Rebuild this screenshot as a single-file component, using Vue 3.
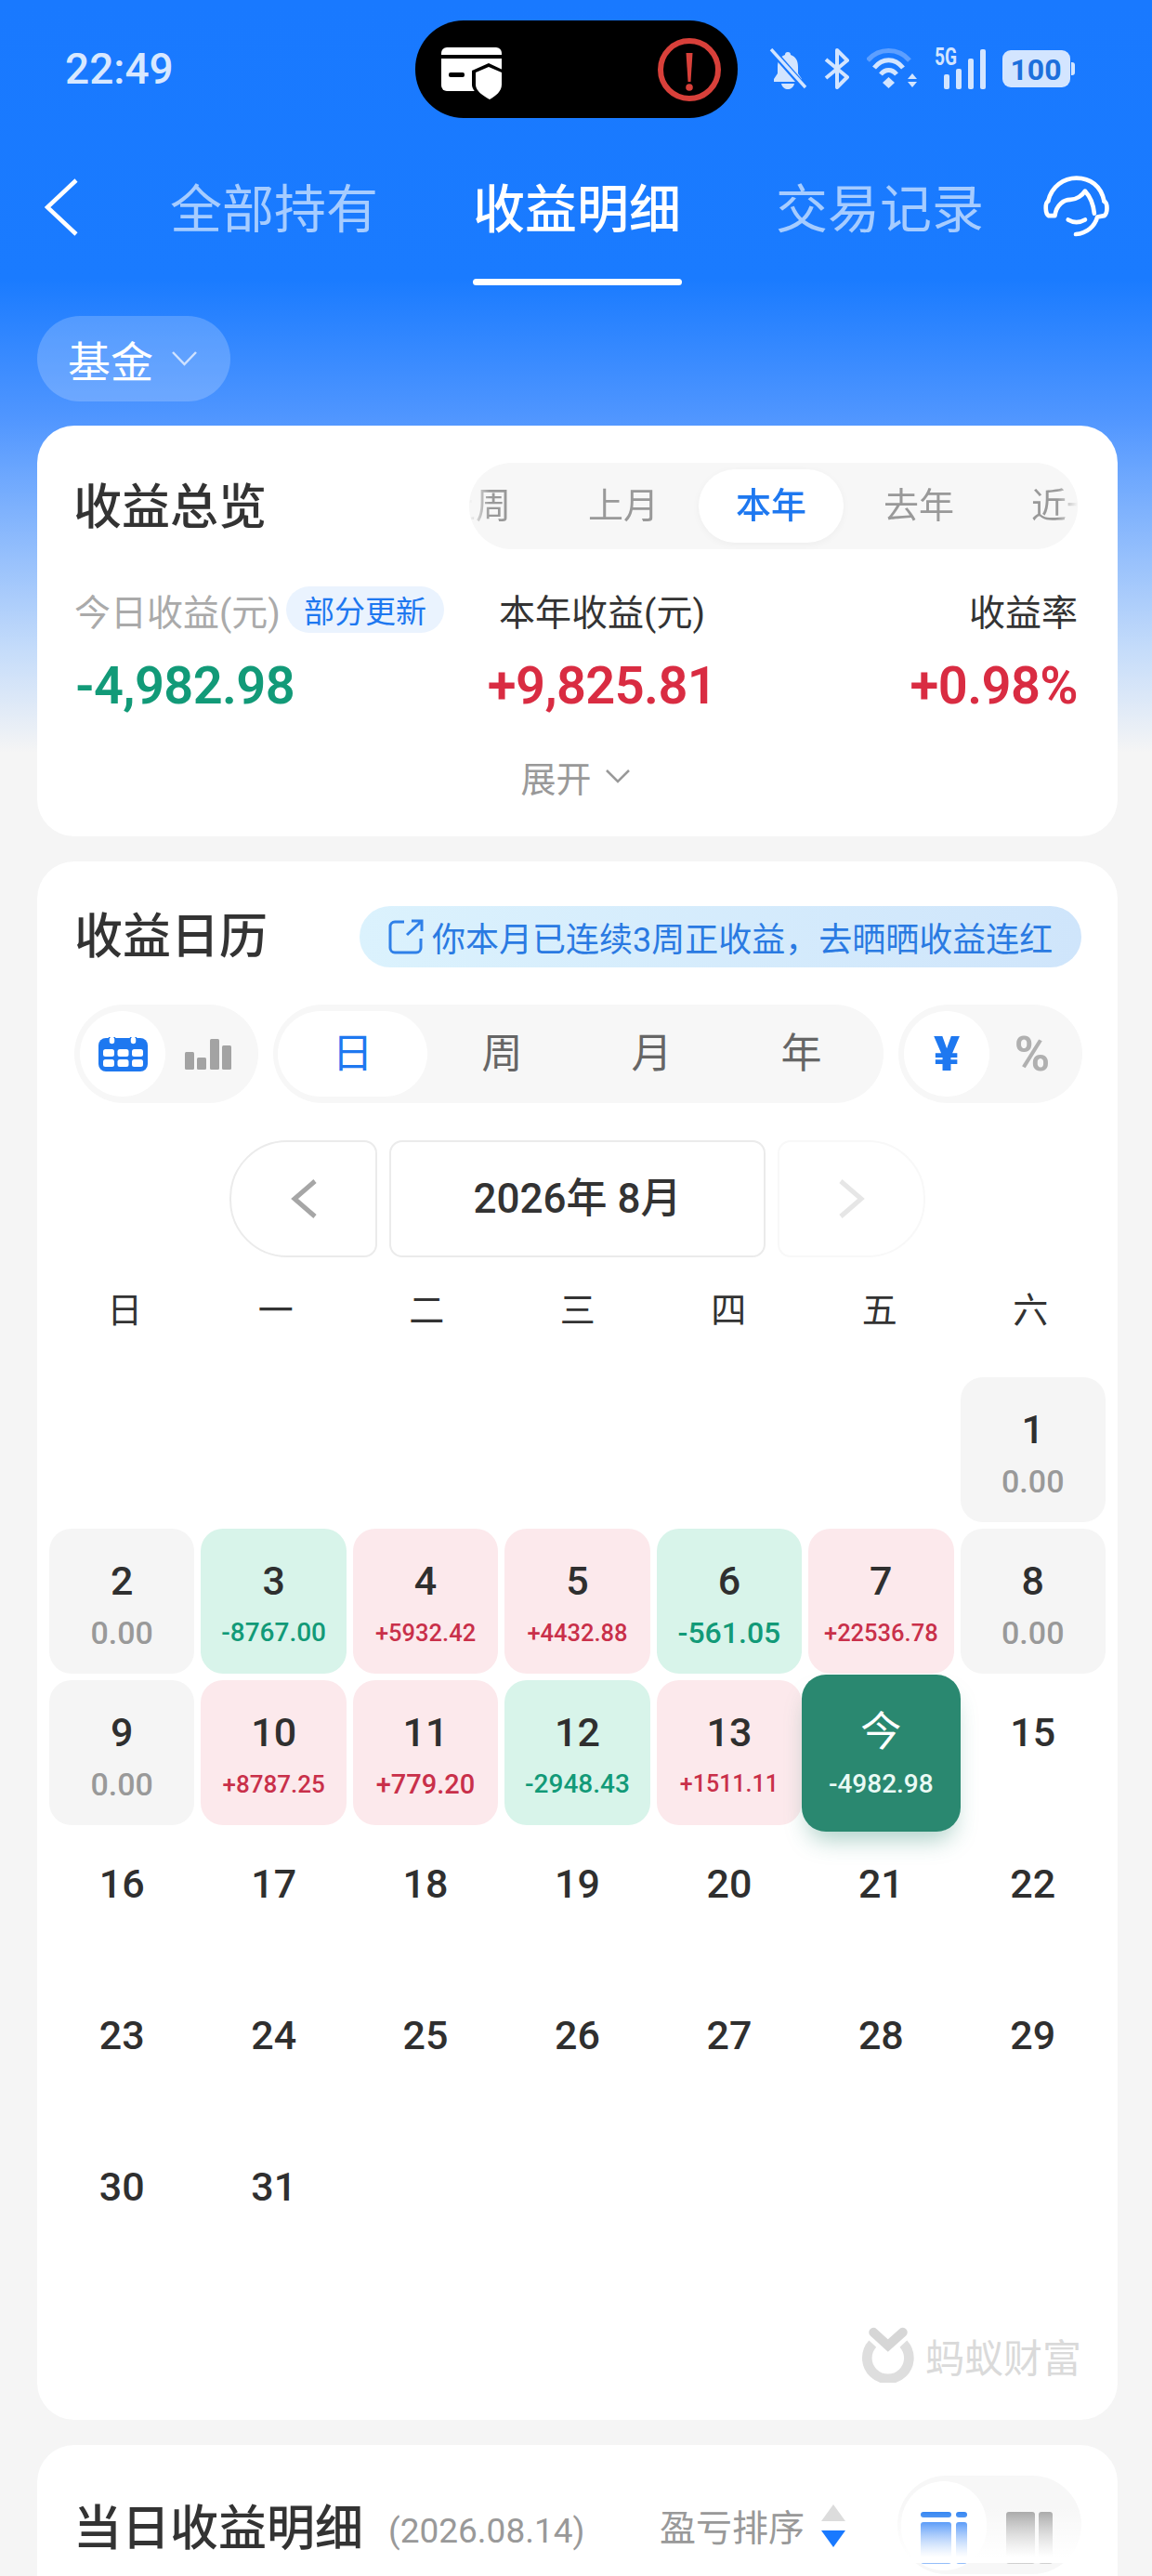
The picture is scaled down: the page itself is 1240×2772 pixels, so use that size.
<script setup>
const weekdays = ['日', '一', '二', '三', '四', '五', '六']
const blanks = [1, 2, 3, 4, 5, 6]
const cells = [
  { d: '1', v: '0.00', t: 'zero', s: 34 },
  { d: '2', v: '0.00', t: 'zero', s: 34 },
  { d: '3', v: '-8767.00', t: 'down', s: 28 },
  { d: '4', v: '+5932.42', t: 'up', s: 25.5 },
  { d: '5', v: '+4432.88', t: 'up', s: 25.5 },
  { d: '6', v: '-561.05', t: 'down', s: 32 },
  { d: '7', v: '+22536.78', t: 'up', s: 25.5 },
  { d: '8', v: '0.00', t: 'zero', s: 34 },
  { d: '9', v: '0.00', t: 'zero', s: 34 },
  { d: '10', v: '+8787.25', t: 'up', s: 26 },
  { d: '11', v: '+779.20', t: 'up', s: 29 },
  { d: '12', v: '-2948.43', t: 'down', s: 28 },
  { d: '13', v: '+1511.11', t: 'up', s: 25 },
  { d: '今', v: '-4982.98', t: 'today', s: 28 },
  ...Array.from({ length: 17 }, (_, i) => ({ d: String(15 + i), v: '', t: 'plain', s: 0 }))
]
const periods = ['上周', '上月', '本年', '去年', '近一月']
const units = ['日', '周', '月', '年']
</script>

<template>
  <div class="page">
    <div class="status">
      <span class="time">22:49</span>
      <div class="island">
        <svg class="isl-card" width="68" height="60" viewBox="0 0 68 60">
          <path d="M6 0H59a6 6 0 0 1 6 6V8H0V6a6 6 0 0 1 6-6Z" fill="#fff" />
          <path d="M0 12H65V47H6a6 6 0 0 1-6-6Z" fill="#fff" />
          <rect x="8" y="27" width="17" height="5" rx="2" fill="#000" />
          <path d="M51 17 68 25V40C68 48 60 55 52 59 44 55 33 48 33 40V25Z" fill="#000" />
          <path d="M51 21 65 27V40C65 47 59 52 52 56 45 52 37 47 37 40V27Z" fill="#fff" />
        </svg>
        <svg class="isl-alert" width="70" height="70" viewBox="0 0 70 70">
          <circle cx="35" cy="35" r="31" fill="none" stroke="#d8403a" stroke-width="6" />
          <path d="M31.500 17h7l-2 31h-3Z" fill="#d8403a" />
          <circle cx="35" cy="54" r="3.800" fill="#d8403a" />
        </svg>
      </div>
      <div class="sys">
        <svg width="41" height="44" viewBox="0 0 41 44">
          <path d="M20 4a3 3 0 0 1 3 3c6 2 8 7 8 13v7l4 6v3H5v-3l4-6v-7c0-6 2-11 8-13a3 3 0 0 1 3-3Z" fill="#d3e5ff" />
          <path d="M13 38h14c-1 4-4 6-7 6s-6-2-7-6Z" fill="#d3e5ff" />
          <path d="M1 0 38 42" stroke="#1979ff" stroke-width="7" />
          <path d="M2 1 39 42" stroke="#d3e5ff" stroke-width="3.400" />
        </svg>
        <svg width="28" height="44" viewBox="0 0 28 44">
          <path d="M2 12 25 31 14 42V2L25 13 2 32" fill="none" stroke="#d3e5ff" stroke-width="4" stroke-linejoin="round" />
        </svg>
        <svg width="55" height="44" viewBox="0 0 55 44">
          <path d="M1 13C13 -1 34 -1 46 13" fill="none" stroke="#5d9fff" stroke-width="5" />
          <path d="M8 21C17 10 30 10 39 21" fill="none" stroke="#d3e5ff" stroke-width="5" />
          <path d="M15 28C20 22 27 22 32 28" fill="none" stroke="#d3e5ff" stroke-width="5" />
          <path d="M23.500 31 30 37 23.500 43 17 37Z" fill="#d3e5ff" />
          <path d="M49 27 54 33H44ZM44 36H54L49 42Z" fill="#d3e5ff" />
        </svg>
        <svg class="signal" width="55" height="54" viewBox="0 -10 55 54">
          <text x="0" y="18" class="five-g" textLength="24" lengthAdjust="spacingAndGlyphs">5G</text>
          <rect x="10" y="28" width="6" height="16" rx="2" fill="#d3e5ff" />
          <rect x="23" y="22" width="6" height="22" rx="2" fill="#d3e5ff" />
          <rect x="36" y="11" width="6" height="33" rx="2" fill="#d3e5ff" />
          <rect x="49" y="1" width="6" height="43" rx="2" fill="#d3e5ff" />
        </svg>
        <svg width="78" height="44" viewBox="0 0 78 44">
          <rect x="0" y="2" width="73" height="40" rx="9" fill="#d3e5ff" />
          <path d="M74 15h1a3 3 0 0 1 3 3v8a3 3 0 0 1-3 3h-1Z" fill="#d3e5ff" />
          <text x="36" y="34" class="batt">100</text>
        </svg>
      </div>
    </div>

    <div class="nav">
      <svg class="back" width="36" height="62" viewBox="0 0 36 62">
        <path d="M34 2 3 31 34 60" fill="none" stroke="#fff" stroke-width="4.500" />
      </svg>
      <div class="tabs">
        <div class="tab">全部持有</div>
        <div class="tab on">收益明细<i class="bar"></i></div>
        <div class="tab">交易记录</div>
      </div>
      <svg class="headset" width="72" height="68" viewBox="40 42 216 205">
        <g fill="none" stroke="#fff" stroke-width="14" stroke-linecap="round" stroke-linejoin="round">
          <path d="M58 125C70 75 110 50 150 50 195 50 230 75 240 125" />
          <path d="M58 125C48 130 48 165 60 172L80 172C85 135 110 120 130 120 150 120 170 105 178 92 195 110 205 135 208 165" />
          <path d="M240 125C252 130 252 165 240 172L218 176C210 205 185 230 148 232" />
          <path d="M123 185C140 195 160 195 178 185" />
        </g>
      </svg>
    </div>

    <div class="filter">基金
      <svg width="29" height="16" viewBox="0 0 29 16"><path d="M2 1 14.500 14 27 1" fill="none" stroke="#cfe2ff" stroke-width="2.500" /></svg>
    </div>

    <section class="card overview">
      <div class="ov-head">
        <h2 class="title">收益总览</h2>
        <div class="periods">
          <div class="periods-view">
            <div class="periods-track">
              <span v-for="p in periods" :key="p" class="period" :class="{ on: p === '本年' }">{{ p }}</span>
            </div>
          </div>
        </div>
      </div>
      <div class="stats">
        <div class="stat">
          <div class="label muted">今日收益(元)<span class="tag">部分更新</span></div>
          <div class="num green">-4,982.98</div>
        </div>
        <div class="stat mid">
          <div class="label">本年收益(元)</div>
          <div class="num red">+9,825.81</div>
        </div>
        <div class="stat end">
          <div class="label">收益率</div>
          <div class="num red">+0.98%</div>
        </div>
      </div>
      <div class="expand">展开
        <svg width="28" height="15" viewBox="0 0 28 15"><path d="M2 1 14 13 26 1" fill="none" stroke="#999" stroke-width="2.500" /></svg>
      </div>
    </section>

    <section class="card calendar">
      <div class="cal-head">
        <h2 class="title">收益日历</h2>
        <div class="banner">
          <svg width="38" height="38" viewBox="0 0 38 38">
            <path d="M17 3H7a5 5 0 0 0-5 5v23a5 5 0 0 0 5 5h23a5 5 0 0 0 5-5V21" fill="none" stroke="#2f80e8" stroke-width="3" />
            <path d="M20 17 35 3M25 2h11v11" fill="none" stroke="#2f80e8" stroke-width="3" />
          </svg>
          <span>你本月已连续3周正收益，去晒晒收益连红</span>
        </div>
      </div>

      <div class="controls">
        <div class="toggle">
          <span class="knob">
            <svg width="53" height="37" viewBox="0 0 53 37">
              <path d="M8 1H45a8 8 0 0 1 8 8V29a8 8 0 0 1-8 8H8a8 8 0 0 1-8-8V9a8 8 0 0 1 8-8Z" fill="#1e78f0" />
              <rect x="11" y="-1" width="7" height="9" rx="3.500" fill="#fff" stroke="#1e78f0" stroke-width="1.500" />
              <rect x="34" y="-1" width="7" height="9" rx="3.500" fill="#fff" stroke="#1e78f0" stroke-width="1.500" />
              <g fill="#fff">
                <rect x="5" y="13" width="12" height="8" rx="2.500" /><rect x="20.500" y="13" width="12" height="8" rx="2.500" /><rect x="36" y="13" width="12" height="8" rx="2.500" />
                <rect x="5" y="24" width="12" height="8" rx="2.500" /><rect x="20.500" y="24" width="12" height="8" rx="2.500" /><rect x="36" y="24" width="12" height="8" rx="2.500" />
              </g>
            </svg>
          </span>
          <span class="alt">
            <svg width="50" height="33" viewBox="0 0 50 33" fill="#a3a3a3">
              <rect x="0" y="14" width="10" height="19" rx="1.500" /><rect x="13" y="20" width="10" height="13" rx="1.500" /><rect x="27" y="0" width="10" height="33" rx="1.500" /><rect x="40" y="7" width="10" height="26" rx="1.500" />
            </svg>
          </span>
        </div>
        <div class="units">
          <span v-for="u in units" :key="u" class="unit" :class="{ on: u === '日' }">{{ u }}</span>
        </div>
        <div class="toggle">
          <span class="knob yen">¥</span>
          <span class="alt pct">%</span>
        </div>
      </div>

      <div class="month">
        <div class="m-btn prev">
          <svg width="28" height="42" viewBox="0 0 28 42"><path d="M26 2 4 21 26 40" fill="none" stroke="#a6a6a6" stroke-width="5" /></svg>
        </div>
        <div class="m-label">2026年 8月</div>
        <div class="m-btn next">
          <svg width="28" height="42" viewBox="0 0 28 42"><path d="M2 2 24 21 2 40" fill="none" stroke="#e6e6e6" stroke-width="5" /></svg>
        </div>
      </div>

      <div class="week">
        <span v-for="w in weekdays" :key="w">{{ w }}</span>
      </div>

      <div class="grid">
        <div v-for="b in blanks" :key="b"></div>
        <div v-for="c in cells" :key="c.d" class="cell" :class="c.t">
          <div class="day">{{ c.d }}</div>
          <div v-if="c.v" class="val" :style="{ fontSize: c.s + 'px' }">{{ c.v }}</div>
        </div>
      </div>

      <div class="brand">
        <svg width="58" height="60" viewBox="35 28 175 180">
          <path d="M72 82A68 68 0 1 0 172 82" fill="none" stroke="#dedede" stroke-width="32" />
          <path d="M75 45 122 88 170 45" fill="none" stroke="#d6d6d6" stroke-width="30" stroke-linecap="round" />
        </svg>
        <span>蚂蚁财富</span>
      </div>
    </section>

    <section class="card detail">
      <div class="det-head">
        <h2 class="title">当日收益明细</h2>
        <span class="date">(2026.08.14)</span>
        <span class="sort">盈亏排序</span>
        <svg class="sort-ic" width="28" height="46" viewBox="0 0 28 46">
          <path d="M14 0 27 18H1Z" fill="#dcdcdc" />
          <path d="M1 28H27L14 46Z" fill="#1979ff" />
        </svg>
        <div class="toggle det-toggle">
          <span class="knob">
            <svg width="50" height="56" viewBox="0 0 50 56">
              <defs>
                <linearGradient id="bl" x1="0" y1="0" x2="0" y2="1"><stop offset="0" stop-color="#1470f5" /><stop offset="1" stop-color="#1470f5" stop-opacity=".45" /></linearGradient>
              </defs>
              <rect x="0" y="0" width="33" height="6" rx="3" fill="#1e78f0" /><rect x="38" y="0" width="12" height="6" rx="3" fill="#1e78f0" />
              <rect x="0" y="11" width="33" height="45" rx="3" fill="url(#bl)" /><rect x="38" y="11" width="12" height="45" rx="3" fill="url(#bl)" />
            </svg>
          </span>
          <span class="alt">
            <svg width="50" height="56" viewBox="0 0 50 56">
              <defs>
                <linearGradient id="gr" x1="0" y1="0" x2="0" y2="1"><stop offset="0" stop-color="#a0a0a0" /><stop offset="1" stop-color="#a0a0a0" stop-opacity=".45" /></linearGradient>
              </defs>
              <rect x="0" y="0" width="31" height="56" rx="3" fill="url(#gr)" /><rect x="35" y="0" width="15" height="56" rx="3" fill="url(#gr)" />
            </svg>
          </span>
        </div>
      </div>
      <div class="fade"></div>
    </section>
  </div>
</template>

<style scoped>
.page {
  width: 1240px;
  height: 2772px;
  overflow: hidden;
  position: relative;
  font-family: Roboto, "Noto Sans CJK SC", sans-serif;
  color: #333;
  background: linear-gradient(180deg, #1979ff 0, #1a7bff 300px, #5096ff 450px, #c5dcfa 700px, #f5f5f5 810px);
}
.status {
  display: flex;
  align-items: center;
  height: 105px;
  padding-top: 22px;
}
.time {
  padding-left: 70px;
  box-sizing: border-box;
  width: 447px;
  font-size: 46px;
  font-weight: 500;
  color: #d8e8ff;
  line-height: 1;
  margin-top: -2px;
}
.island {
  width: 347px;
  height: 105px;
  border-radius: 52px;
  background: #000;
  display: flex;
  align-items: center;
  justify-content: space-between;
  box-sizing: border-box;
  padding: 0 17px 0 28px;
}
.isl-card { margin-top: 12px; }
.sys {
  margin-left: 34px;
  display: flex;
  align-items: center;
  gap: 18px;
  margin-top: -2px;
}
.signal { margin-top: -10px; }
.five-g { font: 700 25px Roboto, sans-serif; fill: #d3e5ff; }
.batt { font: 700 32px Roboto, sans-serif; fill: #1d70dc; text-anchor: middle; }
.nav {
  display: flex;
  align-items: flex-start;
  height: 179px;
  padding-left: 48px;
}
.back { margin-top: 65px; margin-right: 101px; flex: none; }
.tabs { display: flex; gap: 106px; margin-top: 69px; }
.tab {
  width: 220px;
  font-size: 56px;
  line-height: 60px;
  color: #a6ccff;
  white-space: nowrap;
  display: flex;
  flex-direction: column;
  align-items: center;
}
.tab.on { color: #fff; font-weight: 500; }
.bar {
  display: block;
  flex: none;
  width: 225px;
  height: 7px;
  border-radius: 4px;
  background: #fff;
  margin-top: 44px;
}
.headset { margin-left: 65px; margin-top: 62px; flex: none; }
.filter {
  margin: 34px 0 0 40px;
  width: 208px;
  height: 92px;
  border-radius: 46px;
  background: rgba(255, 255, 255, .2);
  color: #fff;
  font-size: 46px;
  display: flex;
  align-items: center;
  box-sizing: border-box;
  padding-left: 33px;
  gap: 19px;
}
.card {
  margin: 26px 37px 0 40px;
  background: #fff;
  border-radius: 40px;
}
.title {
  margin: 0;
  font-size: 52px;
  font-weight: 500;
  line-height: 60px;
  color: #333;
  white-space: nowrap;
}
.overview {
  height: 442px;
  padding: 40px 43px 0 39px;
  box-sizing: border-box;
}
.ov-head { display: flex; align-items: center; justify-content: space-between; }
.ov-head .title { margin-top: 5px; }
.periods {
  width: 655px;
  height: 93px;
  border-radius: 46px;
  background: #f7f7f7;
  overflow: hidden;
}
.periods-view {
  height: 93px;
  overflow: hidden;
  -webkit-mask-image: linear-gradient(90deg, transparent 0, #000 22px, #000 calc(100% - 22px), transparent 100%);
  mask-image: linear-gradient(90deg, transparent 0, #000 22px, #000 calc(100% - 22px), transparent 100%);
}
.periods-track {
  display: flex;
  gap: 3px;
  margin-left: -71px;
  padding-top: 7px;
  width: 900px;
}
.period {
  flex: none;
  height: 79px;
  line-height: 79px;
  padding: 0 40px;
  border-radius: 40px;
  font-size: 38px;
  color: #999;
  white-space: nowrap;
}
.period.on {
  background: #fff;
  color: #1e78f0;
  font-weight: 500;
  box-shadow: 0 2px 8px rgba(0, 0, 0, .04);
}
.stats {
  display: grid;
  grid-template-columns: 449px 238px 1fr;
  margin-top: 40px;
  margin-left: 1px;
}
.label {
  height: 50px;
  display: flex;
  align-items: center;
  font-size: 39px;
  color: #333;
  white-space: nowrap;
}
.muted { color: #aaa; }
.tag {
  margin-left: 6px;
  height: 50px;
  width: 170px;
  display: flex;
  align-items: center;
  justify-content: center;
  border-radius: 25px;
  background: #eaf3fe;
  color: #1e78f0;
  font-size: 33px;
}
.num {
  margin-top: 22px;
  height: 70px;
  line-height: 70px;
  font-size: 56px;
  font-weight: 600;
  letter-spacing: -.6px;
  white-space: nowrap;
}
.stat:first-child .num { margin-left: 1px; }
.green { color: #129a78; }
.red { color: #d92c42; }
.mid { display: flex; flex-direction: column; align-items: center; }
.end { display: flex; flex-direction: column; align-items: flex-end; }
.expand {
  margin-top: 37px;
  height: 50px;
  display: flex;
  align-items: center;
  justify-content: center;
  gap: 14px;
  font-size: 38px;
  color: #999;
}
.calendar {
  margin-top: 27px;
  padding: 48px 39px 39px 13px;
  position: relative;
}
.cal-head {
  display: flex;
  align-items: center;
  justify-content: space-between;
  height: 66px;
  padding-left: 27px;
}
.cal-head .title { margin-top: 2px; }
.banner {
  width: 777px;
  height: 66px;
  border-radius: 33px;
  background: linear-gradient(90deg, #dbf2fd, #cfe5fb);
  display: flex;
  align-items: center;
  box-sizing: border-box;
  padding-left: 31px;
  gap: 9px;
  font-size: 36px;
  color: #2a7ae2;
  white-space: nowrap;
}
.controls {
  display: flex;
  gap: 16px;
  margin: 40px 0 0 27px;
}
.toggle {
  width: 198px;
  height: 106px;
  border-radius: 53px;
  background: #f7f7f7;
  display: flex;
  align-items: center;
  box-sizing: border-box;
  padding-left: 6px;
  flex: none;
}
.knob {
  width: 92px;
  height: 92px;
  border-radius: 46px;
  background: #fff;
  display: flex;
  align-items: center;
  justify-content: center;
  flex: none;
}
.alt {
  width: 92px;
  display: flex;
  align-items: center;
  justify-content: center;
  flex: none;
}
.yen { font-size: 52px; font-weight: 900; color: #1e78f0; }
.pct { font-size: 52px; font-weight: 700; color: #b0b0b0; }
.units {
  width: 657px;
  height: 106px;
  border-radius: 53px;
  background: #f7f7f7;
  display: grid;
  grid-template-columns: repeat(4, 161px);
  align-items: center;
  padding-left: 5px;
  box-sizing: border-box;
  flex: none;
}
.unit {
  height: 92px;
  line-height: 92px;
  border-radius: 46px;
  text-align: center;
  font-size: 44px;
  color: #666;
}
.unit.on { background: #fff; color: #1e78f0; }
.month {
  display: flex;
  gap: 13px;
  margin: 40px 0 0 194px;
  height: 126px;
}
.m-btn {
  width: 159px;
  height: 126px;
  box-sizing: border-box;
  display: flex;
  align-items: center;
  justify-content: center;
  border: 2px solid #ebebeb;
}
.prev { border-radius: 62px 14px 14px 62px; }
.next { border-color: #f8f8f8; border-radius: 14px 62px 62px 14px; }
.m-label {
  width: 405px;
  height: 126px;
  box-sizing: border-box;
  border: 2px solid #ebebeb;
  border-radius: 14px;
  text-align: center;
  line-height: 122px;
  font-size: 44px;
  font-weight: 500;
  white-space: nowrap;
}
.week {
  display: grid;
  grid-template-columns: repeat(7, 162.500px);
  margin: 32px 0 0 0;
  height: 50px;
  line-height: 50px;
  font-size: 38px;
  text-align: center;
  color: #333;
}
.grid {
  display: grid;
  grid-template-columns: repeat(7, 156.430px);
  grid-auto-rows: 156px;
  gap: 7px;
  margin-top: 47px;
}
.cell {
  border-radius: 24px;
  display: flex;
  flex-direction: column;
  align-items: center;
  padding-top: 30px;
  box-sizing: border-box;
  white-space: nowrap;
}
.day {
  font-size: 43px;
  line-height: 52px;
  font-weight: 500;
  color: #2f2f2f;
}
.val { margin-top: 10px; line-height: 40px; font-weight: 500; }
.zero { background: #f5f5f5; }
.zero .val { color: #999; }
.up { background: #fce9ec; }
.up .val { color: #c9304a; }
.down { background: #d8f4ea; }
.down .val { color: #129a78; }
.today {
  margin: -6px -7px -7px;
  padding-top: 36px;
  background: #2a8870;
  border-radius: 26px;
  position: relative;
  z-index: 1;
  box-shadow: 0 16px 26px -8px rgba(42, 136, 112, .4);
}
.today .day { color: #fff; font-weight: 400; font-size: 44px; }
.today .val { color: #eafaf5; }
.brand {
  margin-top: 50px;
  display: flex;
  justify-content: flex-end;
  align-items: center;
  gap: 11px;
  height: 62px;
  font-size: 42px;
  font-weight: 400;
  color: #dadada;
}
.detail {
  margin-top: 27px;
  height: 300px;
  padding: 33px 39px 0 39px;
  box-sizing: border-box;
  position: relative;
}
.det-head { display: flex; align-items: center; height: 106px; }
.det-head .title { margin-top: 10px; }
.date {
  margin-left: 27px;
  font-size: 37px;
  color: #999;
  margin-top: 12px;
  width: 292px;
  white-space: nowrap;
}
.sort { font-size: 39px; color: #999; white-space: nowrap; width: 173px; }
.sort-ic { flex: none; margin-top: 2px; }
.det-toggle {
  margin-left: 55px;
  padding-left: 4px;
  align-items: flex-start;
}
.det-toggle .knob { margin-top: 6px; height: 96px; align-items: flex-start; padding-top: 33px; box-sizing: border-box; }
.det-toggle .alt { padding-top: 39px; }
.fade {
  position: absolute;
  left: 913px;
  right: 0;
  top: 66px;
  height: 61px;
  background: linear-gradient(180deg, rgba(255, 255, 255, 0), #fff 90%);
}
</style>

<style>
html, body { margin: 0; background: #f5f5f5; }
</style>
